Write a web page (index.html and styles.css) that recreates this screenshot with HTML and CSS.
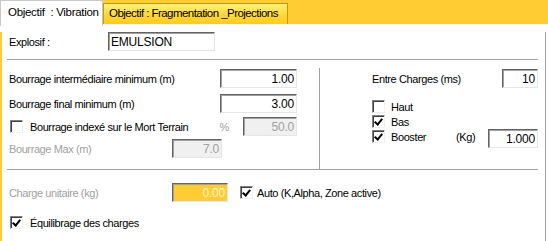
FILE: index.html
```html
<!DOCTYPE html>
<html lang="fr">
<head>
    <meta charset="UTF-8">
    <title>Objectif : Vibration</title>
    <link rel="stylesheet" href="styles.css">
</head>
<body>
    <div class="tabs">
        <div class="tab active">Objectif &nbsp;: Vibration</div>
        <div class="tab">Objectif : Fragmentation _Projections</div>
    </div>
    <div class="panel">
        <div class="row explosif">
            <span class="label">Explosif :</span>
            <input class="field left w106" type="text" value="EMULSION">
        </div>
        <div class="sep"></div>
        <div class="middle">
            <div class="col-left">
                <div class="row r1">
                    <span class="label">Bourrage intermédiaire minimum (m)</span>
                    <input class="field w77" type="text" value="1.00">
                </div>
                <div class="row r2">
                    <span class="label">Bourrage final minimum (m)</span>
                    <input class="field w77" type="text" value="3.00">
                </div>
                <div class="row r3">
                    <span class="check"></span>
                    <span class="label chk-label">Bourrage indexé sur le Mort Terrain</span>
                    <span class="label off pct">%</span>
                    <input class="field disabled w54" type="text" value="50.0" disabled>
                </div>
                <div class="row r4">
                    <span class="label off">Bourrage Max (m)</span>
                    <input class="field disabled w50" type="text" value="7.0" disabled>
                </div>
            </div>
            <div class="vsep"></div>
            <div class="col-right">
                <div class="row r1">
                    <span class="label">Entre Charges (ms)</span>
                    <input class="field w36" type="text" value="10">
                </div>
                <div class="checks">
                    <div class="crow"><span class="check"></span><span class="label">Haut</span></div>
                    <div class="crow"><span class="check on"></span><span class="label">Bas</span></div>
                    <div class="crow">
                        <span class="check on"></span><span class="label">Booster</span>
                        <span class="label kg">(Kg)</span>
                        <input class="field w50" type="text" value="1.000">
                    </div>
                </div>
            </div>
        </div>
        <div class="sep"></div>
        <div class="row charge">
            <span class="label off lead">Charge unitaire (kg)</span>
            <input class="field yellow w56" type="text" value="0.00" disabled>
            <span class="check on"></span>
            <span class="label auto">Auto (K,Alpha, Zone active)</span>
        </div>
        <div class="row equil">
            <span class="check on"></span>
            <span class="label">Équilibrage des charges</span>
        </div>
    </div>
</body>
</html>
```

FILE: styles.css
```css
* {
    padding: 0;
    margin: 0;
    box-sizing: border-box;
}

body {
    width: 548px;
    height: 241px;
    background: #fff;
    font-family: "Liberation Sans", Arial, sans-serif;
    font-size: 11px;
    letter-spacing: -0.4px;
    color: #000;
    overflow: hidden;
}

.tabs {
    height: 25px;
    background: #ffcc33;
    display: flex;
    align-items: flex-end;
    border-bottom: 1px solid #fff6d8;
}

.tab {
    font-size: 11.5px;
    letter-spacing: -0.55px;
    height: 21px;
    padding: 3px 6px 0 5px;
    border: 1px solid #c99a00;
    border-bottom: none;
    background: linear-gradient(#fff27a, #ffd533 60%, #ffcc22);
    white-space: nowrap;
    width: 185px;
}

.tab.active {
    letter-spacing: -0.3px;
    height: 26px;
    margin-bottom: -2px;
    padding: 5px 0 0 7px;
    background: #fff;
    border-color: #c8c8c8;
    width: 103px;
    position: relative;
    z-index: 1;
}

.panel {
    width: 546px;
    height: 215px;
    border-left: 2px solid #ffcc33;
    border-right: 1px solid #a0a0a0;
    padding-left: 7px;
}

.row {
    display: flex;
    align-items: center;
    height: 19px;
}

.label {
    white-space: nowrap;
}

.off {
    color: #a0a0a0;
}

.field {
    font: 12px "Liberation Sans", Arial, sans-serif;
    letter-spacing: -0.2px;
    height: 19px;
    text-align: right;
    padding: 0 2px 0 2px;
    border: 1px solid;
    border-color: #646464 #e6e6e6 #e6e6e6 #646464;
    box-shadow: inset 1px 1px 0 #a0a0a0;
    background: #fff;
    color: #000;
    outline: none;
}

.field.left {
    text-align: left;
}

.field.disabled {
    background: #f0f0f0;
    color: #a0a0a0;
}

.field.yellow {
    background: #ffcc33;
    color: #fff4d0;
}

.w106 { width: 107px; }
.w77 { width: 77px; }
.w54 { width: 54px; }
.w50 { width: 50px; }
.w56 { width: 56px; }
.w36 { width: 36px; }

.explosif {
    margin-top: 7px;
}

.explosif .field {
    margin-left: auto;
    margin-right: 330px;
}

.sep {
    height: 2px;
    width: 531px;
    margin-left: -2px;
    border-top: 1px solid #a0a0a0;
    border-bottom: 1px solid #fff;
}

.explosif + .sep {
    margin-top: 8px;
}

.middle {
    display: flex;
    height: 108px;
}

.col-left {
    width: 288px;
}

.col-left .field {
    margin-left: auto;
}

.col-left .r1 { margin-top: 8px; }
.col-left .r2 { margin-top: 6px; }
.col-left .r3 { margin-top: 4px; }
.col-left .r4 { margin-top: 3px; }

.col-left .r3 .pct {
    margin-left: auto;
    margin-right: 14px;
}

.col-left .r3 .field {
    margin-left: 0;
}

.col-left .r4 .field {
    margin-left: auto;
    margin-right: 75px;
}

.chk-label {
    margin-left: 7px;
}

.vsep {
    width: 1px;
    margin-top: 7px;
    margin-left: 22px;
    background: #a0a0a0;
}

.col-right {
    width: 218px;
    padding-left: 52px;
}

.col-right .r1 {
    margin-top: 8px;
}

.col-right .r1 .field {
    margin-left: auto;
}

.checks {
    margin-top: 11px;
}

.crow {
    display: flex;
    align-items: center;
    height: 15px;
}

.crow .label {
    margin-left: 6px;
}

.crow .kg {
    margin-left: 30px;
}

.crow .field {
    margin-left: auto;
    margin-top: 4px;
}

.check {
    flex: none;
    width: 13px;
    height: 13px;
    border: 1px solid;
    border-color: #808080 #f0f0f0 #f0f0f0 #808080;
    box-shadow: inset 1px 1px 0 #404040;
    background: #fff;
    display: inline-block;
    position: relative;
}

.check.on::after {
    content: "";
    position: absolute;
    left: 3px;
    top: 1px;
    width: 3px;
    height: 6px;
    border: solid #000;
    border-width: 0 2px 2px 0;
    transform: rotate(40deg);
}

.r3 .check {
    margin-left: 1px;
}

.charge {
    margin-top: 12px;
}

.charge .lead {
    width: 163px;
}

.charge .field {
    margin-right: 12px;
}

.charge .auto {
    margin-left: 4px;
}

.equil {
    margin-top: 11px;
}

.equil .check {
    margin-left: 1px;
}

.equil .label {
    margin-left: 7px;
}
```
